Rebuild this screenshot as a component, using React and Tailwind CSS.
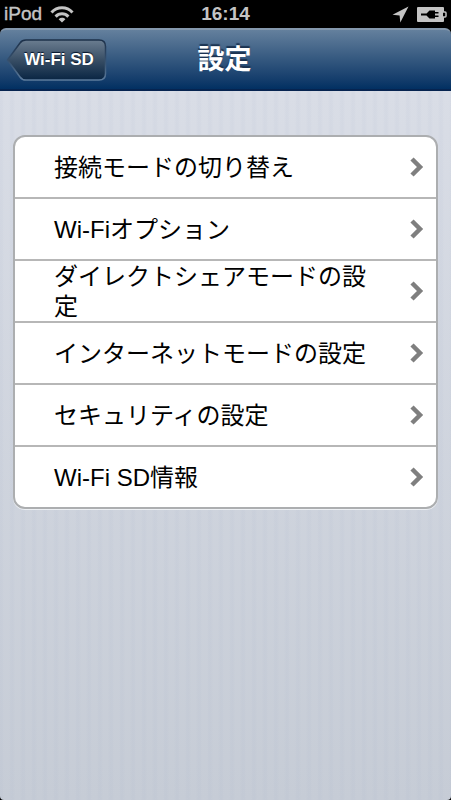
import React from "react";

const rows = [
  "接続モードの切り替え",
  "Wi-Fiオプション",
  "ダイレクトシェアモードの設定",
  "インターネットモードの設定",
  "セキュリティの設定",
  "Wi-Fi SD情報",
];

function StatusBar() {
  return (
    <div className="grid h-7 grid-cols-3 items-center bg-black px-1 text-[#c4c4c4]">
      <div className="flex items-center gap-2 text-[19px] leading-7">
        <span className="[-webkit-text-stroke:0.4px_#c4c4c4]">iPod</span>
        <svg width="24" height="18" viewBox="0 0 24 18" fill="none" stroke="currentColor" strokeWidth="3" aria-label="Wi-Fi">
          <path d="M1.500 7.4C7.200 1.200 16.800 1.200 22.500 7.400" />
          <path d="M5.600 11.600C9.200 7.800 14.800 7.800 18.400 11.600" />
          <path d="M12 17.500L8.600 14.200C10.600 12.300 13.400 12.300 15.400 14.200Z" fill="currentColor" stroke="none" />
        </svg>
      </div>
      <div className="text-center text-[19px] font-bold leading-7">16:14</div>
      <div className="flex items-center justify-end gap-2">
        <svg width="17" height="17" viewBox="0 0 17 17" fill="currentColor" aria-label="位置情報">
          <path d="M16.500 .5L8.300 16.500L7.600 9.500L.5 8.700Z" />
        </svg>
        <svg width="30" height="15" viewBox="0 0 30 15" aria-label="充電中">
          <path d="M1 0H26Q27 0 27 1V14Q27 15 26 15H1Q0 15 0 14V1Q0 0 1 0Z" fill="currentColor" />
          <path d="M26 5H28Q29 5 29 6V9Q29 10 28 10H26" fill="#000" stroke="currentColor" strokeWidth="1.500" />
          <path d="M4 6.500H9.500L12.500 3.500H18V5H21.500V6.500H18V8.500H21.500V10H18V11.500H12.500L9.500 8.500H4Z" fill="#000" />
        </svg>
      </div>
    </div>
  );
}

function BackButton() {
  return (
    <button type="button" className="relative h-11 w-[102px] pl-1 text-[17px] font-bold text-white [text-shadow:0_-1px_1px_#001028]">
      <svg className="absolute inset-0" width="102" height="44" viewBox="0 0 102 44" aria-hidden="true">
        <defs>
          <linearGradient id="backFill" x1="0" y1="0" x2="0" y2="1">
            <stop offset="0" stopColor="#6b7d90" />
            <stop offset="0.5" stopColor="#384e65" />
            <stop offset="1" stopColor="#092543" />
          </linearGradient>
          <linearGradient id="backEdge" x1="0" y1="0" x2="0" y2="1">
            <stop offset="0" stopColor="#1c3049" />
            <stop offset="0.6" stopColor="#3a5675" />
            <stop offset="1" stopColor="#5c7b9c" />
          </linearGradient>
        </defs>
        <path d="M1.500 22L14 5Q16 2 20 2H93Q99.500 2 99.500 8.500V35.500Q99.500 42 93 42H20Q16 42 14 39Z" fill="url(#backFill)" stroke="url(#backEdge)" strokeWidth="1.500" />
      </svg>
      <span className="relative">Wi-Fi SD</span>
    </button>
  );
}

export default function App() {
  return (
    <div className="flex min-h-screen flex-col bg-black font-['Liberation_Sans','Noto_Sans_CJK_JP',sans-serif]">
      <StatusBar />
      <header className="grid h-[63px] grid-cols-[1fr_auto_1fr] items-center rounded-t-md border-b-2 border-t-2 border-b-[#062450] border-t-[#8498ad] bg-linear-to-b from-[#64809d] via-[#34587f] to-[#023062] pl-[6px] pr-2">
        <BackButton />
        <h1 className="text-[27px] font-bold leading-9 text-white [text-shadow:0_-2px_1px_#1b3351]">設定</h1>
      </header>
      <main lang="ja" className="flex-1 rounded-b-sm bg-[repeating-linear-gradient(90deg,#98a6c410_0px,#98a6c410_2px,transparent_4px,transparent_9px,#98a6c410_11px),linear-gradient(#d9dde6,#c6ccd6)] px-[13px] pt-11">
        <ul className="divide-y-2 divide-[#b7b7b7] overflow-hidden rounded-xl border-2 border-[#acaeb0] bg-white shadow-[0_1px_0_#edf0f4]">
          {rows.map((label) => (
            <li key={label}>
              <a href="#" className="flex h-[60px] items-center justify-between pl-[39px] pr-3 text-2xl leading-[30px] text-black">
                <span className="w-80 pt-0.5">{label}</span>
                <svg width="14" height="20" viewBox="0 0 14 20" fill="none" stroke="#7f7f7f" strokeWidth="4.500" aria-hidden="true">
                  <path d="M2 2L10 10L2 18" />
                </svg>
              </a>
            </li>
          ))}
        </ul>
      </main>
    </div>
  );
}
